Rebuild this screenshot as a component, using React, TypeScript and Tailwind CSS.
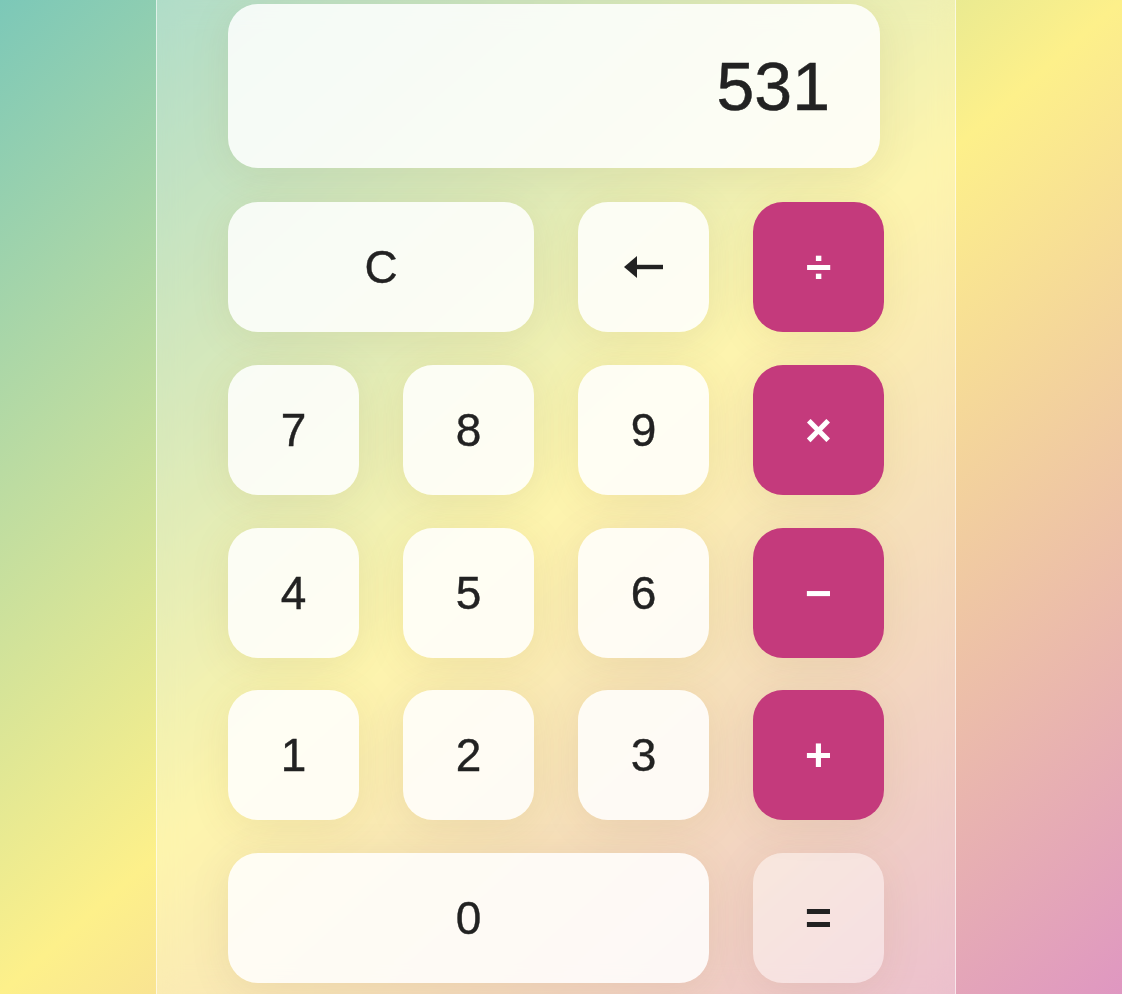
import React from 'react';

type Key = {
  label: string;
  kind: 'num' | 'op' | 'eq';
  span?: string;
};

const keys: Key[] = [
  { label: 'C', kind: 'num', span: 'col-span-2' },
  { label: '←', kind: 'num' },
  { label: '÷', kind: 'op' },
  { label: '7', kind: 'num' },
  { label: '8', kind: 'num' },
  { label: '9', kind: 'num' },
  { label: '×', kind: 'op' },
  { label: '4', kind: 'num' },
  { label: '5', kind: 'num' },
  { label: '6', kind: 'num' },
  { label: '−', kind: 'op' },
  { label: '1', kind: 'num' },
  { label: '2', kind: 'num' },
  { label: '3', kind: 'num' },
  { label: '+', kind: 'op' },
  { label: '0', kind: 'num', span: 'col-span-3' },
  { label: '=', kind: 'eq' },
];

function BackArrow() {
  return (
    <svg width="40" height="22" viewBox="0 0 40 22" className="mt-[-1px] shrink-0">
      <path d="M0 11 L13 0 L13 22 Z" fill="#222" />
      <rect x="10" y="8.8" width="29" height="4.4" fill="#222" />
    </svg>
  );
}

function KeyButton({ k }: { k: Key }) {
  const base =
    'h-[130px] rounded-[30px] flex items-center justify-center text-[46px] leading-none shadow-[0_6px_40px_rgba(120,90,40,0.10)]';
  const look =
    k.kind === 'op'
      ? 'bg-[#c43a7c] text-white font-bold'
      : k.kind === 'eq'
        ? 'bg-white/45 text-[#222] font-bold'
        : 'bg-white/85 text-[#222] [-webkit-text-stroke:0.4px_#222]';
  return (
    <button className={`${base} ${look} ${k.span ?? ''}`}>
      {k.label === '←' ? <BackArrow /> : k.label}
    </button>
  );
}

export default function App() {
  return (
    <div
      className="h-[994px] overflow-hidden bg-[linear-gradient(to_bottom_right,#7cc8b8_0%,#fdf08a_50%,#df97c1_100%)]"
      style={{ fontFamily: '"Liberation Sans", Arial, sans-serif' }}
    >
      <div className="ml-[156px] w-[800px] h-full border-x border-white/60 bg-white/30 backdrop-blur-md pt-[4px] pl-[71px]">
        <div className="w-[652px] h-[164px] rounded-[30px] bg-white/85 shadow-[0_6px_40px_rgba(120,90,40,0.10)] flex items-center justify-end pr-[50px] text-[68px] text-[#222] leading-none [-webkit-text-stroke:0.5px_#222]">
          531
        </div>
        <div className="mt-[34px] w-[656px] grid grid-cols-4 gap-x-[44px] gap-y-[32.75px]">
          {keys.map((k) => (
            <KeyButton key={k.label} k={k} />
          ))}
        </div>
      </div>
    </div>
  );
}
